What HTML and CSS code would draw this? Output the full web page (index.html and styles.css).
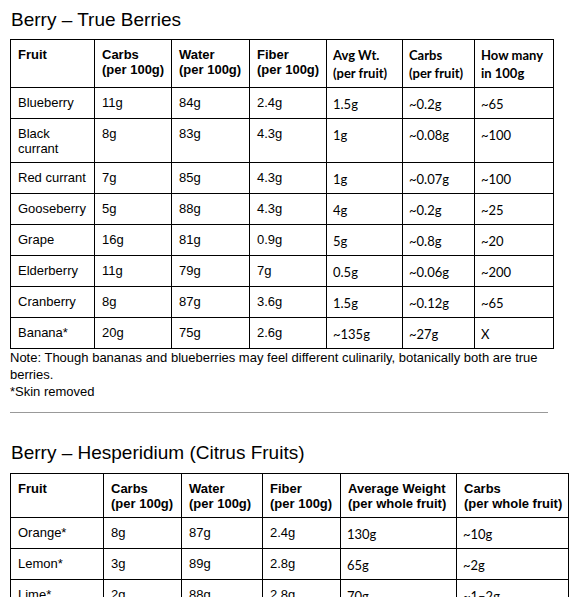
FILE: index.html
```html
<!DOCTYPE html>
<html>
<head>
<meta charset="utf-8">
<link rel="stylesheet" href="styles.css">
</head>
<body>
<div class="page">
  <h2 class="title">Berry – True Berries</h2>
  <table class="grid t1">
    <colgroup>
      <col class="w84"><col class="w77"><col class="w78"><col class="w77"><col class="w76"><col class="w72"><col class="w79">
    </colgroup>
    <tr class="head">
      <th>Fruit</th>
      <th>Carbs<br>(per 100g)</th>
      <th>Water<br>(per 100g)</th>
      <th>Fiber<br>(per 100g)</th>
      <th class="c">Avg Wt.<br>(per fruit)</th>
      <th class="c">Carbs<br>(per fruit)</th>
      <th class="c">How many<br>in 100g</th>
    </tr>
    <tr><td>Blueberry</td><td>11g</td><td>84g</td><td>2.4g</td><td class="c">1.5g</td><td class="c">~0.2g</td><td class="c">~65</td></tr>
    <tr><td>Black currant</td><td>8g</td><td>83g</td><td>4.3g</td><td class="c">1g</td><td class="c">~0.08g</td><td class="c">~100</td></tr>
    <tr><td>Red currant</td><td>7g</td><td>85g</td><td>4.3g</td><td class="c">1g</td><td class="c">~0.07g</td><td class="c">~100</td></tr>
    <tr><td>Gooseberry</td><td>5g</td><td>88g</td><td>4.3g</td><td class="c">4g</td><td class="c">~0.2g</td><td class="c">~25</td></tr>
    <tr><td>Grape</td><td>16g</td><td>81g</td><td>0.9g</td><td class="c">5g</td><td class="c">~0.8g</td><td class="c">~20</td></tr>
    <tr><td>Elderberry</td><td>11g</td><td>79g</td><td>7g</td><td class="c">0.5g</td><td class="c">~0.06g</td><td class="c">~200</td></tr>
    <tr><td>Cranberry</td><td>8g</td><td>87g</td><td>3.6g</td><td class="c">1.5g</td><td class="c">~0.12g</td><td class="c">~65</td></tr>
    <tr><td>Banana*</td><td>20g</td><td>75g</td><td>2.6g</td><td class="c">~135g</td><td class="c">~27g</td><td class="c">X</td></tr>
  </table>
  <p class="note">Note: Though bananas and blueberries may feel different culinarily, botanically both are true berries.<br>*Skin removed</p>
  <hr class="rule">
  <h2 class="title title2">Berry – Hesperidium (Citrus Fruits)</h2>
  <table class="grid t2">
    <colgroup>
      <col class="w93"><col class="w78"><col class="w81"><col class="w78"><col class="w116"><col class="w112">
    </colgroup>
    <tr class="head">
      <th>Fruit</th>
      <th>Carbs<br>(per 100g)</th>
      <th>Water<br>(per 100g)</th>
      <th>Fiber<br>(per 100g)</th>
      <th>Average Weight<br>(per whole fruit)</th>
      <th>Carbs<br>(per whole fruit)</th>
    </tr>
    <tr><td>Orange*</td><td>8g</td><td>87g</td><td>2.4g</td><td class="c">130g</td><td class="c">~10g</td></tr>
    <tr><td>Lemon*</td><td>3g</td><td>89g</td><td>2.8g</td><td class="c">65g</td><td class="c">~2g</td></tr>
    <tr><td>Lime*</td><td>2g</td><td>88g</td><td>2.8g</td><td class="c">70g</td><td class="c">~1–2g</td></tr>
  </table>
</div>
</body>
</html>
```
FILE: styles.css
```css
html, body {
  margin: 0;
  padding: 0;
  background: #ffffff;
  color: #000000;
}
body {
  font-family: "Liberation Sans", Arial, sans-serif;
  font-size: 13px;
}
.page {
  width: 538px;
  padding: 9px 10px 0 10px;
}
.title {
  margin: 0 0 8px 1px;
  font-size: 19px;
  line-height: 22px;
  font-weight: normal;
}
.title2 {
  margin-top: 29px;
  margin-bottom: 9px;
}
.grid {
  border-collapse: collapse;
  table-layout: fixed;
}
.t1 { width: 543px; }
.t2 { width: 558px; }
.grid th,
.grid td {
  border: 1px solid #000;
  padding: 7px 7px 6px 7px;
  line-height: 15px;
  vertical-align: top;
  text-align: left;
  white-space: normal;
}
.grid th {
  font-weight: bold;
  white-space: nowrap;
}
.grid td.c,
.grid th.c {
  font-family: Lato, "Liberation Sans", sans-serif;
  font-size: 13px;
  line-height: 18px;
  padding: 7px 7px 5px 6px;
}
.grid .head th.c {
  padding-top: 6px;
  padding-bottom: 5px;
}
.w72 { width: 72px; }
.w76 { width: 76px; }
.w77 { width: 77px; }
.w78 { width: 78px; }
.w79 { width: 79px; }
.w81 { width: 81px; }
.w84 { width: 84px; }
.w93 { width: 93px; }
.w112 { width: 112px; }
.w116 { width: 116px; }
.note {
  margin: 0;
  line-height: 17px;
}
.rule {
  margin: 12px 0 0 0;
  border: 0;
  border-top: 1px solid #999;
  height: 0;
  width: 538px;
}
```
